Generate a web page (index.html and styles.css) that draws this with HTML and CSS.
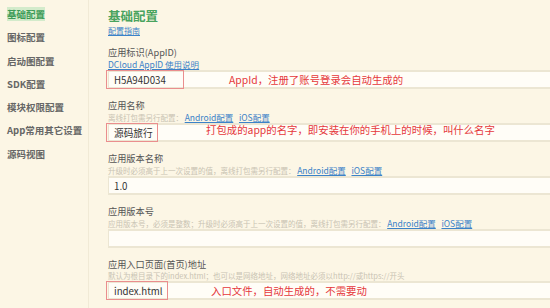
FILE: index.html
```html
<!DOCTYPE html>
<html lang="zh-CN">
<head>
    <meta charset="UTF-8">
    <title>基础配置</title>
    <link rel="stylesheet" href="styles.css">
</head>
<body>
    <div class="page">
        <aside class="sidebar">
            <div class="nav-item active"><span>基础配置</span></div>
            <div class="nav-item">图标配置</div>
            <div class="nav-item">启动图配置</div>
            <div class="nav-item">SDK配置</div>
            <div class="nav-item">模块权限配置</div>
            <div class="nav-item">App常用其它设置</div>
            <div class="nav-item">源码视图</div>
        </aside>

        <main class="content">
            <h2>基础配置</h2>
            <a class="guide" href="#">配置指南</a>

            <div class="section">
                <div class="label">应用标识(AppID)</div>
                <div class="desc"><a href="#">DCloud AppID 使用说明</a></div>
                <div class="field">
                    <span class="mark mark-id">H5A94D034</span>
                    <span class="note note-id">AppId，注册了账号登录会自动生成的</span>
                </div>
            </div>

            <div class="section">
                <div class="label">应用名称</div>
                <div class="desc">离线打包需另行配置： <a href="#">Android配置</a> <a href="#">iOS配置</a></div>
                <div class="field">
                    <span class="mark mark-name">源码旅行</span>
                    <span class="note note-name">打包成的app的名字，即安装在你的手机上的时候，叫什么名字</span>
                </div>
            </div>

            <div class="section">
                <div class="label">应用版本名称</div>
                <div class="desc">升级时必须高于上一次设置的值，离线打包需另行配置： <a href="#">Android配置</a> <a href="#">iOS配置</a></div>
                <div class="field"><span class="value">1.0</span></div>
            </div>

            <div class="section">
                <div class="label">应用版本号</div>
                <div class="desc">应用版本号，必须是整数；升级时必须高于上一次设置的值，离线打包需另行配置： <a href="#">Android配置</a> <a href="#">iOS配置</a></div>
                <div class="field"></div>
            </div>

            <div class="section">
                <div class="label">应用入口页面(首页)地址</div>
                <div class="desc">默认为根目录下的index.html；也可以是网络地址，网络地址必须以http://或https://开头</div>
                <div class="field">
                    <span class="mark mark-index">index.html</span>
                    <span class="note note-index">入口文件，自动生成的，不需要动</span>
                </div>
            </div>
        </main>
    </div>
</body>
</html>
```

FILE: styles.css
```css
body {
    margin: 0;
    background-color: #fcf6e5;
    font-family: "Noto Sans CJK SC", "Noto Sans", sans-serif;
    color: #555;
    overflow: hidden;
}
a {
    color: #3b82c8;
    text-decoration: underline;
}
.page {
    display: flex;
    height: 308px;
}
.sidebar {
    width: 88px;
    flex-shrink: 0;
    border-right: 1px solid #f1ead6;
    padding-top: 5px;
}
.nav-item {
    height: 23.3px;
    line-height: 19px;
    padding-left: 7px;
    font-size: 9.5px;
    font-weight: bold;
    color: #666;
    white-space: nowrap;
}
.nav-item.active span {
    color: #3e9b57;
    background-color: #d3ebcb;
}
.content {
    flex: 1;
    padding: 7px 0 0 19px;
    overflow: hidden;
}
h2 {
    margin: 0 0 1px;
    font-size: 12.5px;
    line-height: 17px;
    color: #49a35e;
}
.guide {
    display: block;
    font-size: 8px;
    line-height: 11px;
    margin-bottom: 10px;
}
.section {
    margin-bottom: 10px;
}
.label {
    font-size: 9.2px;
    line-height: 12px;
    color: #555;
}
.desc {
    margin-top: 1px;
    font-size: 7.5px;
    line-height: 10px;
    color: #c9c3b3;
    white-space: nowrap;
}
.desc a {
    font-size: 8.5px;
    margin-right: 4px;
}
.field {
    display: flex;
    align-items: center;
    width: 480px;
    height: 19px;
    box-sizing: border-box;
    background-color: #fffdf7;
    border-top: 2px solid #ece6d3;
    border-bottom: 2px solid #ece6d3;
    border-left: 1px solid #ece6d3;
    font-size: 9.7px;
    color: #333;
    white-space: nowrap;
}
.value {
    padding-left: 5px;
}
.mark {
    align-self: stretch;
    display: flex;
    align-items: center;
    box-sizing: border-box;
    margin: -2px 0 -2px -3px;
    padding-left: 7px;
    border: 1px solid #ea8e8e;
}
.mark-id {
    width: 78px;
}
.mark-name {
    width: 52px;
}
.mark-index {
    width: 62px;
}
.note {
    color: #e5383b;
    font-size: 10.4px;
    line-height: 13px;
}
.note-id {
    margin-left: 45px;
}
.note-name {
    margin-left: 48px;
    align-self: flex-start;
    margin-top: -2px;
}
.note-index {
    margin-left: 43px;
}
```
